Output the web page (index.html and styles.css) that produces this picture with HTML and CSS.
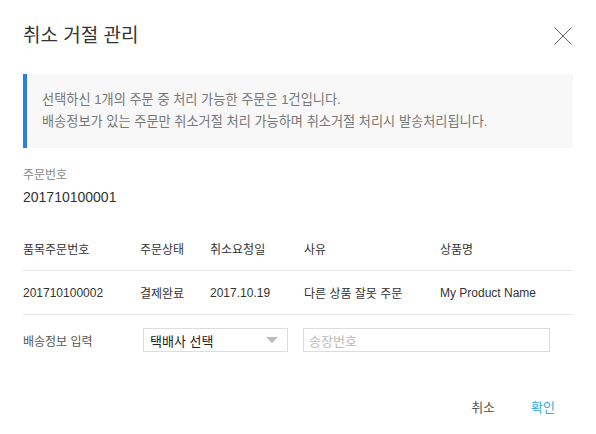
FILE: index.html
```html
<!DOCTYPE html>
<html lang="ko">
<head>
<meta charset="utf-8">
<link rel="stylesheet" href="styles.css">
</head>
<body>
<div class="dialog">
  <header class="head">
    <h1 class="title">취소 거절 관리</h1>
    <button class="close" aria-label="닫기">
      <svg width="18" height="18" viewBox="0 0 18 18"><path d="M0.5 0.5L17.5 17.5M17.5 0.5L0.5 17.5" stroke="#666" stroke-width="1" fill="none"/></svg>
    </button>
  </header>
  <div class="notice">
    <p>선택하신 1개의 주문 중 처리 가능한 주문은 1건입니다.</p>
    <p>배송정보가 있는 주문만 취소거절 처리 가능하며 취소거절 처리시 발송처리됩니다.</p>
  </div>
  <div class="order">
    <div class="order-label">주문번호</div>
    <div class="order-no">201710100001</div>
  </div>
  <div class="table">
    <div class="row th">
      <span class="c1">품목주문번호</span><span class="c2">주문상태</span><span class="c3">취소요청일</span><span class="c4">사유</span><span class="c5">상품명</span>
    </div>
    <div class="row td">
      <span class="c1">201710100002</span><span class="c2">결제완료</span><span class="c3">2017.10.19</span><span class="c4">다른 상품 잘못 주문</span><span class="c5">My Product Name</span>
    </div>
  </div>
  <div class="ship">
    <span class="ship-label">배송정보 입력</span>
    <div class="select"><span>택배사 선택</span><i class="caret"></i></div>
    <div class="input">송장번호</div>
  </div>
  <div class="actions">
    <button class="btn cancel">취소</button>
    <button class="btn ok">확인</button>
  </div>
</div>
</body>
</html>
```
FILE: styles.css
```css
* { box-sizing: border-box; }
html, body { margin: 0; padding: 0; background: #fff; }
body {
  font-family: "Liberation Sans", "Noto Sans CJK KR", sans-serif;
  color: #333;
}
.dialog { width: 596px; padding: 0 23px; }
.head {
  display: flex;
  justify-content: space-between;
  align-items: center;
  height: 74px;
  padding-bottom: 2px;
}
.title {
  margin: 0;
  font-size: 19px;
  font-weight: normal;
  color: #333;
  line-height: 28px;
}
.close {
  border: 0; background: none; padding: 0; margin-right: 1px;
  width: 18px; height: 18px; display: block;
}
.close svg { display: block; }
.notice {
  background: #f8f8f8;
  border-left: 4px solid #2b7fe0;
  padding: 15px 15px 16px 15px;
  height: 74px;
  font-size: 13.2px;
  color: #777;
  line-height: 22px;
}
.notice p { margin: 0; }
.order { padding-top: 18px; }
.order-label { font-size: 12px; color: #888; line-height: 18px; }
.order-no { font-size: 14px; color: #333; line-height: 22px; margin-top: 2px; }
.table { margin-top: 19px; font-size: 12px; }
.row {
  display: flex;
  align-items: center;
  height: 44px;
  border-bottom: 1px solid #e6e6e6;
}
.th { color: #333; }
.td { color: #333; }
.c1 { width: 117px; }
.c2 { width: 70px; }
.c3 { width: 94px; }
.c4 { width: 136px; }
.c5 { flex: 1; }
.ship {
  display: flex;
  align-items: center;
  height: 50px;
  font-size: 12px;
}
.ship-label { width: 120px; color: #555; }
.select {
  width: 145px; height: 24px;
  border: 1px solid #ddd;
  display: flex; align-items: center; justify-content: space-between;
  padding: 0 9px 0 6px;
  font-size: 13px; color: #222;
}
.caret {
  width: 0; height: 0;
  border-left: 6px solid transparent;
  border-right: 6px solid transparent;
  border-top: 6px solid #bbb;
}
.input {
  margin-left: 15px;
  width: 247px; height: 24px;
  border: 1px solid #ddd;
  display: flex; align-items: center;
  padding: 0 5px;
  font-size: 13px; color: #bbb;
}
.actions {
  display: flex; justify-content: flex-end;
  gap: 36px;
  padding-top: 33px;
  padding-right: 18px;
}
.btn {
  border: 0; background: none; padding: 0;
  font-family: inherit; font-size: 13px;
  line-height: 20px;
}
.cancel { color: #555; }
.ok { color: #2eaaf0; }
```
